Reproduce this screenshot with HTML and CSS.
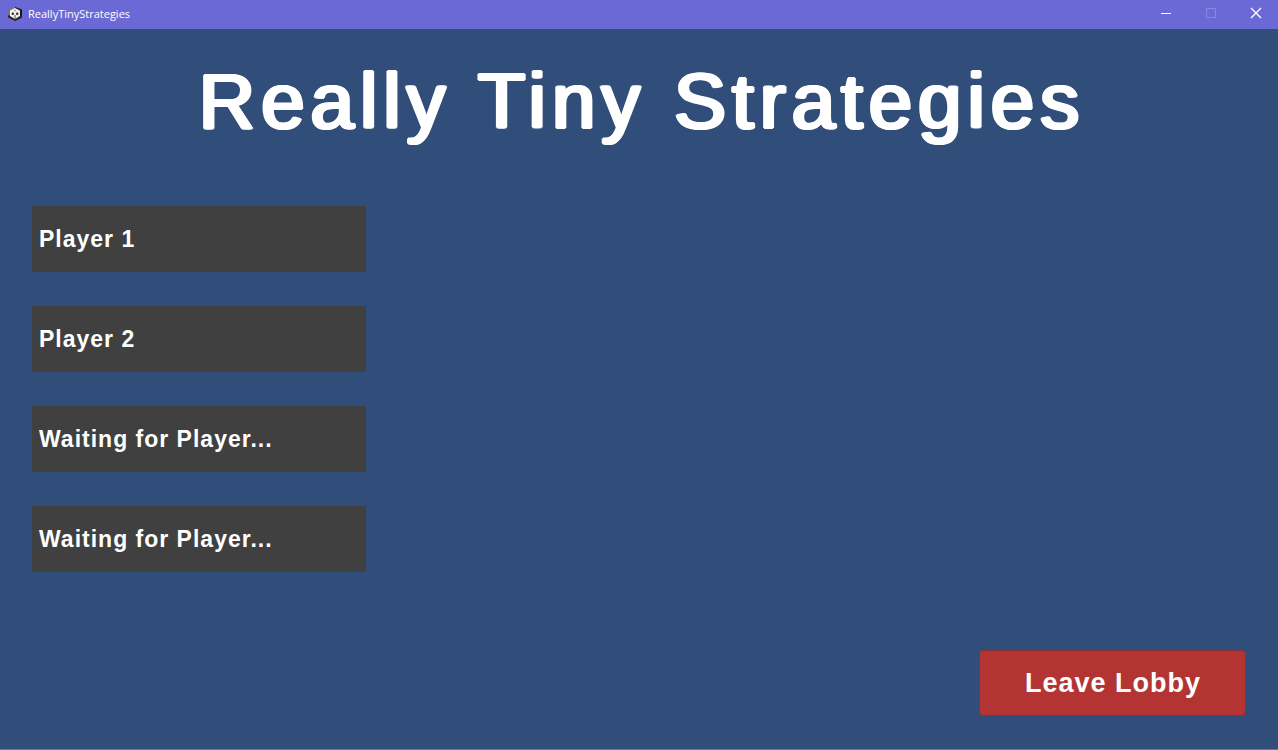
FILE: index.html
```html
<!DOCTYPE html>
<html lang="en">
<head>
<meta charset="utf-8">
<title>ReallyTinyStrategies</title>
<link rel="stylesheet" href="styles.css">
</head>
<body>
<header class="titlebar">
  <svg class="app-icon" viewBox="0 0 14 16" aria-hidden="true">
    <path d="M7 1 14 3.500v8L7 15 0 11.500v-8z" fill="#77727c"/>
    <path d="M7 1 14 3.500v8L7 15z" fill="#17151b"/>
    <path d="M0 9v2.500L7 15l7-3.500V9l-7 3z" fill="#29272c"/>
    <path d="M7 2 12 4.500v5.500L7 13l-5-3V4.500z" fill="#f1f1ec"/>
    <path d="M7 9v4" stroke="#55515a" fill="none"/>
    <circle cx="7" cy="4.500" r=".8" fill="#77727c"/>
    <circle cx="4.800" cy="7.800" r="1.200" fill="#29262c"/>
    <circle cx="9.200" cy="7.800" r="1.200" fill="#29262c"/>
  </svg>
  <span class="app-name">ReallyTinyStrategies</span>
  <div class="window-controls">
    <button class="control" aria-label="Minimize"><svg viewBox="0 0 10 10"><path d="M0 5.500h10"/></svg></button>
    <button class="control" aria-label="Maximize" disabled><svg viewBox="0 0 10 10"><path d="M.5.5h9v9h-9z"/></svg></button>
    <button class="control" aria-label="Close"><svg class="close" viewBox="0 0 10 10"><path d="m0 0 10 10M10 0 0 10"/></svg></button>
  </div>
</header>
<main class="lobby">
  <h1 class="game-title">Really Tiny Strategies</h1>
  <ul class="players">
    <li class="player">Player 1</li>
    <li class="player">Player 2</li>
    <li class="player">Waiting for Player...</li>
    <li class="player">Waiting for Player...</li>
  </ul>
  <button class="leave">Leave Lobby</button>
</main>
</body>
</html>
```
FILE: styles.css
```css
* {
  box-sizing: border-box;
}

body {
  display: flex;
  flex-direction: column;
  min-height: 100vh;
  margin: 0;
  background: #314d79;
  border-bottom: 1px solid #6b69d6;
  color: #fff;
  font-family: "Liberation Sans", Arial, sans-serif;
}

.titlebar {
  display: flex;
  align-items: center;
  height: 29px;
  padding: 0 0 2px 8px;
  background: #6b69d6;
}

.app-icon {
  width: 14px;
  height: 16px;
  margin-right: 6px;
}

.app-name {
  font-family: "Open Sans", "Noto Sans", sans-serif;
  font-size: 11px;
  line-height: 16px;
}

.window-controls {
  display: flex;
  margin-left: auto;
}

.control {
  display: flex;
  align-items: center;
  justify-content: center;
  width: 45px;
  height: 27px;
  padding: 0 0 1px;
  border: 0;
  background: none;
  color: #fff;
}

.control:disabled {
  color: #8b89df;
}

.control svg {
  width: 10px;
  height: 10px;
  overflow: visible;
  fill: none;
  stroke: currentColor;
}

.control .close {
  stroke-width: 1.4;
}

.lobby {
  display: flex;
  flex: 1;
  flex-direction: column;
  padding: 24px 32px 33px;
}

.game-title {
  margin: 0 0 57px;
  padding-left: 6px;
  font-size: 78px;
  font-weight: 400;
  letter-spacing: 6px;
  line-height: 96px;
  text-align: center;
  -webkit-text-stroke: 1px #fff;
  text-shadow: 1px 1px #fff, -1px 1px #fff, 1px -1px #fff, -1px -1px #fff,
    2px 0 #fff, -2px 0 #fff;
}

.players {
  display: grid;
  gap: 34px;
  width: 334px;
  max-width: 100%;
  margin: 0;
  padding: 0;
  list-style: none;
}

.player {
  padding: 16px 7px;
  background: #404040;
  font-size: 23px;
  font-weight: 700;
  letter-spacing: 1px;
  line-height: 34px;
}

.leave {
  align-self: flex-end;
  margin-top: auto;
  padding: 14px 44px 14px 45px;
  border: 1px solid #8a3038;
  border-radius: 4px;
  background: #b43434;
  color: #fff;
  font-family: inherit;
  font-size: 27px;
  font-weight: 700;
  letter-spacing: 1px;
  line-height: 36px;
}
```
